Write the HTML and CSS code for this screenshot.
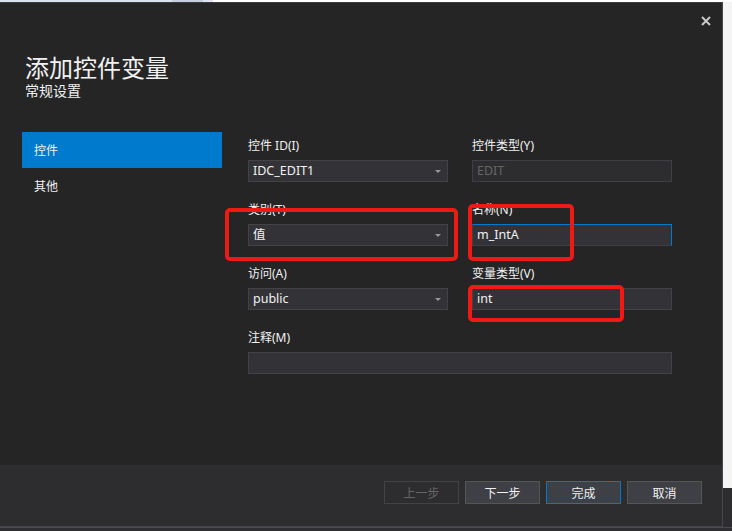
FILE: index.html
```html
<!DOCTYPE html>
<html lang="zh-CN">
<head>
<meta charset="utf-8">
<title>添加控件变量</title>
<link rel="stylesheet" href="styles.css">
</head>
<body>
<div class="topstrip">
  <div class="ts-a"></div>
  <div class="ts-b"></div>
  <div class="ts-c"></div>
  <div class="ts-d"></div>
</div>
<div class="main">
  <div class="dialog">
    <div class="close">
      <svg width="10" height="10" viewBox="0 0 10 10"><path d="M1 1 L9 9 M9 1 L1 9" stroke="#c8c8c8" stroke-width="2"/></svg>
    </div>
    <div class="header">
      <div class="title">添加控件变量</div>
      <div class="subtitle">常规设置</div>
    </div>
    <div class="content">
      <div class="nav">
        <div class="nav-item active">控件</div>
        <div class="nav-item">其他</div>
      </div>
      <div class="form">
        <div class="field">
          <div class="label">控件 ID(I)</div>
          <div class="input combo">IDC_EDIT1<span class="arrow"></span></div>
        </div>
        <div class="field">
          <div class="label">控件类型(Y)</div>
          <div class="input disabled">EDIT</div>
        </div>
        <div class="field">
          <div class="label">类别(T)</div>
          <div class="input combo">值<span class="arrow"></span></div>
        </div>
        <div class="field">
          <div class="label">名称(N)</div>
          <div class="input focused">m_IntA</div>
        </div>
        <div class="field">
          <div class="label">访问(A)</div>
          <div class="input combo">public<span class="arrow"></span></div>
        </div>
        <div class="field">
          <div class="label">变量类型(V)</div>
          <div class="input">int</div>
        </div>
        <div class="field wide">
          <div class="label">注释(M)</div>
          <div class="input"></div>
        </div>
      </div>
    </div>
    <div class="footer">
      <button class="btn disabled">上一步</button>
      <button class="btn">下一步</button>
      <button class="btn primary">完成</button>
      <button class="btn">取消</button>
    </div>
    <div class="mark mark1"></div>
    <div class="mark mark2"></div>
    <div class="mark mark3"></div>
  </div>
  <div class="rightstrip">
    <div class="rs-light"></div>
    <div class="rs-dark"></div>
  </div>
</div>
<div class="bottomstrip"></div>
</body>
</html>
```

FILE: styles.css
```css
* { box-sizing: border-box; }
html, body { margin: 0; padding: 0; }
body {
  width: 732px;
  height: 531px;
  overflow: hidden;
  background: #ffffff;
  font-family: "Noto Sans", "Noto Sans CJK SC", sans-serif;
}

.topstrip { display: flex; height: 2px; }
.ts-a { width: 172px; background: #d9e2ef; }
.ts-b { width: 31px; background: #c3cfdf; }
.ts-c { width: 10px; background: #dfe6f0; }
.ts-d { flex: 1; background: #ffffff; }

.main { display: flex; height: 525px; }

.dialog {
  position: relative;
  width: 723px;
  height: 525px;
  background: #252526;
  border-top: 1px solid #3a3a3f;
  border-right: 1px solid #45454b;
  border-bottom: 1px solid #45454b;
  display: flex;
  flex-direction: column;
  color: #f1f1f1;
}

.close {
  position: absolute;
  left: 701px;
  top: 13px;
  width: 10px;
  height: 10px;
  display: flex;
}

.header { padding: 50px 0 0 25px; height: 97px; }
.title {
  font-family: "Noto Sans CJK SC", sans-serif;
  font-size: 24px;
  line-height: 28px;
  color: #f1f1f1;
}
.subtitle {
  font-family: "Noto Sans CJK SC", sans-serif;
  font-size: 14px;
  line-height: 18px;
  color: #f1f1f1;
}

.content { flex: 1; display: flex; padding-left: 22px; }

.nav { width: 200px; margin-top: 32px; }
.nav-item {
  height: 36px;
  line-height: 36px;
  padding-left: 12px;
  font-family: "Noto Sans CJK SC", sans-serif;
  font-size: 12px;
  color: #f1f1f1;
}
.nav-item.active { background: #007acc; }

.form {
  margin-left: 26px;
  margin-top: 38px;
  display: grid;
  grid-template-columns: 200px 200px;
  column-gap: 24px;
  row-gap: 20px;
  align-content: start;
}
.field { display: flex; flex-direction: column; gap: 6px; }
.field.wide { grid-column: 1 / 3; width: 424px; }
.label {
  height: 16px;
  line-height: 16px;
  font-size: 12px;
  color: #f1f1f1;
}
.input {
  position: relative;
  height: 22px;
  line-height: 20px;
  padding-left: 4px;
  background: #333337;
  border: 1px solid #434346;
  font-size: 12.5px;
  color: #f1f1f1;
}
.input.disabled { background: #2d2d30; border-color: #3f3f46; color: #656565; }
.input.focused { border-color: #3f3f46; border-top-color: #007acc; border-right-color: #007acc; }
.arrow {
  position: absolute;
  right: 6px;
  top: 9px;
  width: 0;
  height: 0;
  border-left: 3px solid transparent;
  border-right: 3px solid transparent;
  border-top: 3px solid #999999;
}

.footer {
  height: 61px;
  background: #2d2d30;
  display: flex;
  justify-content: flex-end;
  gap: 6px;
  padding: 16px 20px 0 0;
}
.btn {
  width: 75px;
  height: 23px;
  background: #3f3f46;
  border: 1px solid #555555;
  color: #f1f1f1;
  font-family: "Noto Sans CJK SC", sans-serif;
  font-size: 12px;
  padding: 0;
  line-height: 20px;
}
.btn.disabled { background: transparent; border-color: #434346; color: #656565; }
.btn.primary { border-color: #007acc; }

.mark {
  position: absolute;
  border: 4px solid #f01a14;
  border-radius: 5px;
}
.mark1 { left: 225px; top: 205px; width: 233px; height: 53px; }
.mark2 { left: 468px; top: 201px; width: 106px; height: 57px; }
.mark3 { left: 468px; top: 282px; width: 156px; height: 37px; }

.rightstrip { flex: 1; display: flex; flex-direction: column; }
.rs-light { height: 486px; background: #f4f4f4; }
.rs-dark { flex: 1; background: #2d2d30; }

.bottomstrip { height: 4px; background: #2f2f33; border-top: 1px solid #4a4a50; }
```
